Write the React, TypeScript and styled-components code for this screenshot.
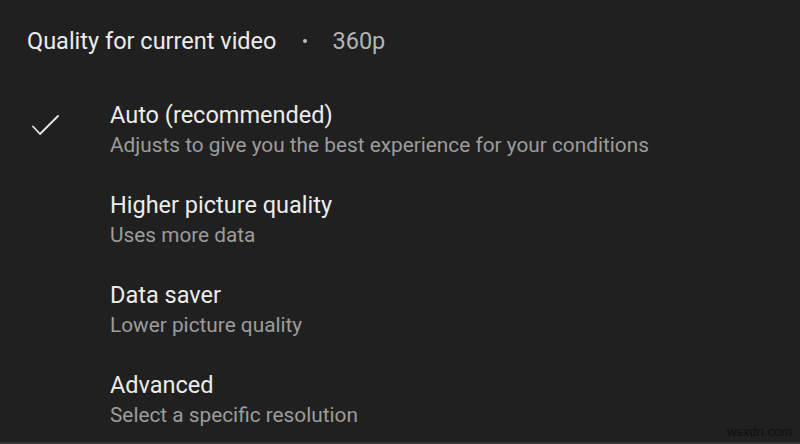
import React from 'react';
import styled, { createGlobalStyle } from 'styled-components';

const GlobalStyle = createGlobalStyle`
  html, body {
    margin: 0;
    padding: 0;
    background: #202020;
  }
  body {
    font-family: Roboto, 'Noto Sans', Arial, sans-serif;
  }
`;

const Sheet = styled.div`
  width: 800px;
  height: 444px;
  box-sizing: border-box;
  background: #202020;
  border-bottom: 2px solid #333;
  position: relative;
  overflow: hidden;
`;

const Header = styled.div`
  display: flex;
  align-items: center;
  height: 82px;
  padding-left: 27px;
  color: #ececec;
  font-size: 23.5px;
  line-height: 28px;
`;

const Dot = styled.span`
  width: 4px;
  height: 4px;
  border-radius: 50%;
  background: #bcbcbc;
  margin: 0 25px 0 27px;
`;

const Current = styled.span`
  color: #b4b4b4;
`;

const List = styled.div`
  display: flex;
  flex-direction: column;
`;

const Option = styled.div`
  display: flex;
  align-items: center;
  height: 90px;
`;

const CheckSlot = styled.div`
  width: 110px;
  display: flex;
  justify-content: flex-start;
  padding-left: 30px;
  box-sizing: border-box;
  color: #e6e6e6;
`;

const Texts = styled.div`
  display: flex;
  flex-direction: column;
  gap: 4px;
  margin-top: 4px;
`;

const Title = styled.div`
  color: #ececec;
  font-size: 23.5px;
  line-height: 28px;
`;

const Subtitle = styled.div`
  color: #9c9c9c;
  font-size: 20.8px;
  line-height: 24px;
`;

const Watermark = styled.span`
  position: absolute;
  right: 8px;
  bottom: 3px;
  font-size: 13px;
  color: #0e0e0e;
  font-family: 'Liberation Sans', Arial, sans-serif;
`;

const options = [
  { title: 'Auto (recommended)', sub: 'Adjusts to give you the best experience for your conditions', checked: true },
  { title: 'Higher picture quality', sub: 'Uses more data' },
  { title: 'Data saver', sub: 'Lower picture quality' },
  { title: 'Advanced', sub: 'Select a specific resolution' },
];

const Check = () => (
  <svg width="30" height="24" viewBox="0 0 30 24" fill="none">
    <path d="M3 11.5 L10 19 L28 1" stroke="currentColor" strokeWidth="1.8" strokeLinecap="round" strokeLinejoin="round" />
  </svg>
);

export default function App() {
  return (
    <>
      <GlobalStyle />
      <Sheet>
        <Header>
          Quality for current video
          <Dot />
          <Current>360p</Current>
        </Header>
        <List>
          {options.map((o) => (
            <Option key={o.title}>
              <CheckSlot>{o.checked && <Check />}</CheckSlot>
              <Texts>
                <Title>{o.title}</Title>
                <Subtitle>{o.sub}</Subtitle>
              </Texts>
            </Option>
          ))}
        </List>
        <Watermark>wsxdn.com</Watermark>
      </Sheet>
    </>
  );
}
